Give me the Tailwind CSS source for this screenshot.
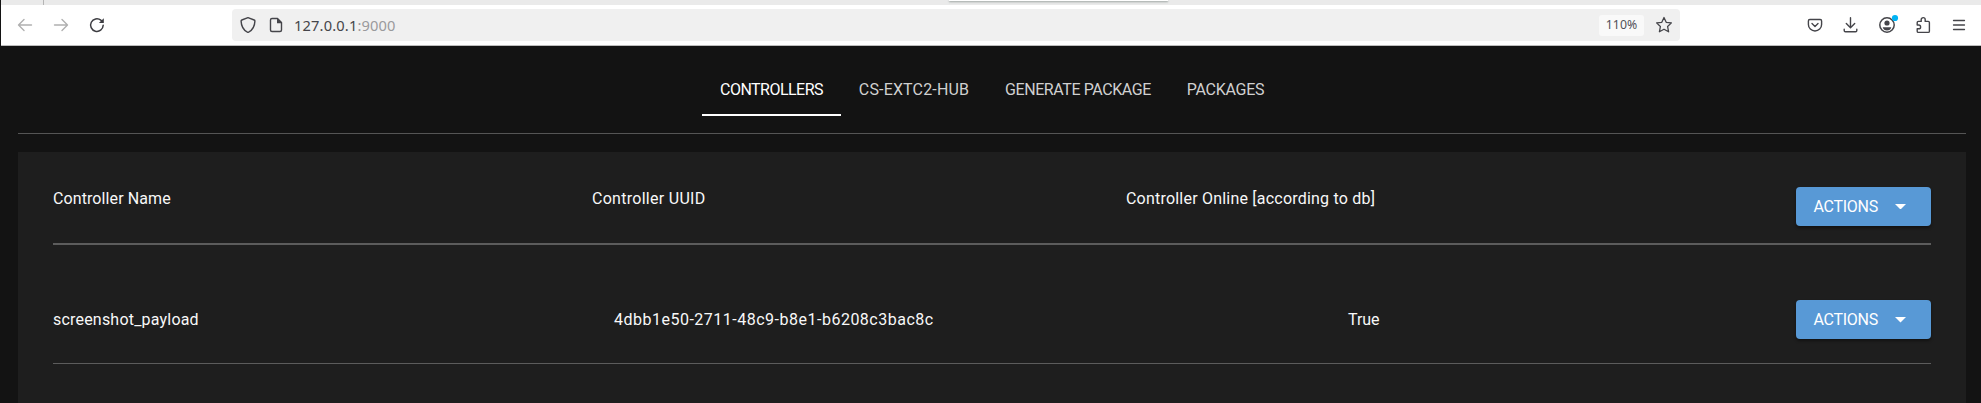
<!DOCTYPE html>
<html lang="en">
<head>
<meta charset="utf-8">
<title>Controllers</title>
<script src="https://cdn.jsdelivr.net/npm/@tailwindcss/browser@4"></script>
</head>
<body class="w-[1981px] h-[403px] overflow-hidden bg-[#131313] font-['Roboto',sans-serif]">
<div class="flex h-full flex-col border-l border-[#131313]">
  <!-- tab strip -->
  <div class="flex h-[5px] shrink-0 bg-[#eaeaea]">
    <div class="h-[5px] w-[43px] border-r border-[#b5b5b5]"></div>
    <div class="ml-[905px] h-px w-[219px] bg-white shadow-[0_1px_2px_#7f8a86]"></div>
  </div>
  <!-- toolbar -->
  <div class="flex h-[41px] shrink-0 items-center border-b border-[#bdbdbd] bg-white text-[#45454a]">
    <div class="flex w-[231px] items-center gap-5 pl-4">
      <svg class="size-4 text-[#b0b0b0]" viewBox="0 0 16 16" fill="none" stroke="currentColor" stroke-width="1.4" stroke-linecap="round" stroke-linejoin="round"><path d="M14.500 8H1.700M7 2.500 1.500 8 7 13.500"/></svg>
      <svg class="size-4 text-[#b0b0b0]" viewBox="0 0 16 16" fill="none" stroke="currentColor" stroke-width="1.4" stroke-linecap="round" stroke-linejoin="round"><path d="M1.500 8h12.800M9 2.500 14.500 8 9 13.500"/></svg>
      <svg class="size-4 text-[#3d3d42]" viewBox="0 0 16 16" fill="none" stroke="currentColor" stroke-width="1.5" stroke-linecap="round"><path d="M14.200 8.300a6.300 6.300 0 1 1-2.300-5.100l1.300 1.200"/><path d="M14.800 1.200v4.900H9.900z" fill="currentColor" stroke="none"/></svg>
    </div>
    <div class="flex h-8 w-[1448px] items-center rounded bg-[#f0f0f0] pl-2">
      <svg class="h-[18px] w-4" viewBox="0 0 16 18" fill="none" stroke="currentColor" stroke-width="1.4" stroke-linejoin="round"><path d="M8 1.600 14.200 4q.8.3.7 1.100c-.2 5.400-2.300 8.900-6.300 11.100q-.6.3-1.200 0C3.400 14 1.300 10.500 1.100 5.100q-.1-.8.7-1.100z"/></svg>
      <svg class="ml-3 size-4" viewBox="0 0 16 16" fill="none" stroke="currentColor" stroke-width="1.4" stroke-linejoin="round"><path d="M9.500 1.500H4Q2.500 1.500 2.500 3v10Q2.500 14.500 4 14.500h8q1.500 0 1.500-1.500V5.500z"/><path d="M9 1.200v5h5z" fill="currentColor" stroke="none"/></svg>
      <div class="ml-[10px] font-['Noto_Sans',sans-serif] text-[14.67px] leading-8 tracking-[0.15px] whitespace-nowrap text-[#45454a]">127.0.0.1<span class="text-[#9a9a9c]">:9000</span></div>
      <div class="ml-auto flex h-[21px] w-[45px] items-center justify-center rounded-[3px] bg-[#f9f9f9] font-['Noto_Sans',sans-serif] text-[12.3px] text-[#505058]">110%</div>
      <svg class="mr-[7px] ml-[11px] size-[18px]" viewBox="0 0 18 18" fill="none" stroke="currentColor" stroke-width="1.3" stroke-linejoin="round"><path d="m9 1.500 2.200 4.800 5.200.6-3.800 3.600 1 5.300L9 13.200l-4.600 2.600 1-5.300L1.600 6.900l5.200-.6z"/></svg>
    </div>
    <div class="ml-[127px] flex items-center gap-5">
      <svg class="size-4" viewBox="0 0 16 16" fill="none" stroke="currentColor" stroke-width="1.4" stroke-linecap="round" stroke-linejoin="round"><path d="M2.800 2.500h10.400q1.400 0 1.400 1.400v3.500a6.600 6.600 0 0 1-13.200 0V3.900q0-1.400 1.400-1.400z"/><path d="M5 6.500l3 3 3-3"/></svg>
      <svg class="size-4" viewBox="0 0 16 16" fill="none" stroke="currentColor" stroke-width="1.4" stroke-linecap="round" stroke-linejoin="round"><path d="M7.500.8v9.700M3.300 6.500 7.500 10.700l4.200-4.200M1.200 12.300v1.200q0 1.200 1.200 1.200h10.200q1.200 0 1.200-1.200v-1.200"/></svg>
      <svg class="-mr-1 h-[18px] w-5 overflow-visible" viewBox="0 0 20 18" fill="none"><circle cx="8" cy="9" r="7.200" stroke="currentColor" stroke-width="1.500"/><circle cx="8" cy="7" r="2.600" fill="currentColor"/><path d="M3.700 11.200h8.600q-.9 3.200-4.300 3.200t-4.300-3.200z" fill="currentColor"/><circle cx="16" cy="2" r="3.100" fill="#00b3f4"/></svg>
      <svg class="h-[18px] w-4" viewBox="0 0 16 18" fill="none" stroke="currentColor" stroke-width="1.400" stroke-linejoin="round"><path d="M6.200 5.400V3.600a2 2 0 0 1 4 0v1.800h3q1.200 0 1.200 1.200v8.600q0 1.200-1.200 1.200H3.400q-1.200 0-1.200-1.200v-2.400h1.500a1.900 1.900 0 0 0 0-3.800H2.200V6.600q0-1.200 1.200-1.200z"/></svg>
      <svg class="size-4" viewBox="0 0 16 16" stroke="currentColor" stroke-width="1.300" stroke-linecap="round"><path d="M2.500 3.500h11M2.500 8h11M2.500 12.500h11"/></svg>
    </div>
  </div>
  <!-- page -->
  <div class="flex grow flex-col pr-[15px] pl-[17px]">
    <nav class="flex h-[88px] shrink-0 justify-center border-b border-[#555] pt-[18px] text-[16px] whitespace-nowrap text-[#d0d0d0]">
      <a class="flex h-[52px] w-[139px] items-center justify-center border-b-2 border-white pt-0.5 tracking-[-0.52px] text-white">CONTROLLERS</a>
      <a class="flex h-[50px] w-[146px] items-center justify-center pt-0.5 tracking-[0.16px]">CS-EXTC2-HUB</a>
      <a class="flex h-[50px] w-[182px] items-center justify-center pt-0.5 tracking-[-0.41px]">GENERATE PACKAGE</a>
      <a class="flex h-[50px] w-[113px] items-center justify-center pt-0.5 tracking-[-0.27px]">PACKAGES</a>
    </nav>
    <main class="mt-[18px] grow bg-[#1e1e1e] px-[35px] text-[16px] whitespace-nowrap text-[#f8f8f8]">
      <div class="grid h-[93px] grid-cols-[539px_534px_1fr_135px] border-b-2 border-[#5c5c5c] pt-[35px]">
        <div class="leading-6 tracking-[0.1px]">Controller Name</div>
        <div class="leading-6 tracking-[0.28px]">Controller UUID</div>
        <div class="leading-6 tracking-[0.21px]">Controller Online [according to db]</div>
        <button class="flex h-[39px] items-center rounded-[4px] bg-[#5899d6] pl-[17.500px] text-white shadow-[0_2px_3px_rgba(0,0,0,0.4)]"><span class="tracking-[-0.27px]">ACTIONS</span><svg class="ml-[17px] h-[5.500px] w-[11px]" viewBox="0 0 11 5.500" fill="currentColor"><path d="M0 0h11L5.500 5.500z"/></svg></button>
      </div>
      <div class="grid h-[119px] grid-cols-[561px_734px_1fr_135px] border-b border-[#5c5c5c] pt-[55px]">
        <div class="pt-2 leading-6 tracking-[0.2px]">screenshot_payload</div>
        <div class="pt-2 leading-6 tracking-[0.5px]">4dbb1e50-2711-48c9-b8e1-b6208c3bac8c</div>
        <div class="pt-2 leading-6 tracking-[-0.05px]">True</div>
        <button class="flex h-[39px] items-center rounded-[4px] bg-[#5899d6] pl-[17.500px] text-white shadow-[0_2px_3px_rgba(0,0,0,0.4)]"><span class="tracking-[-0.27px]">ACTIONS</span><svg class="mt-px ml-[17px] h-[5.500px] w-[11px]" viewBox="0 0 11 5.500" fill="currentColor"><path d="M0 0h11L5.500 5.500z"/></svg></button>
      </div>
    </main>
  </div>
</div>
</body>
</html>
